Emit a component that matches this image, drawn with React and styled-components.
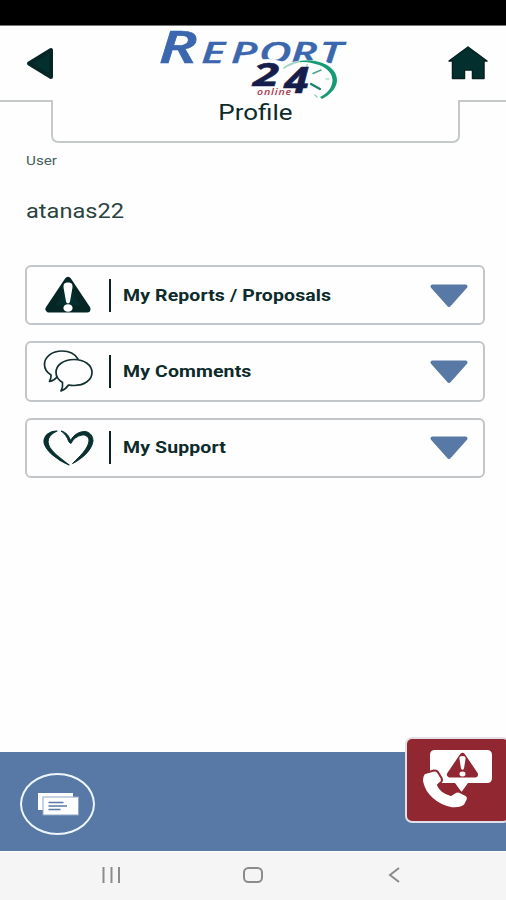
import React from 'react';
import styled, { createGlobalStyle } from 'styled-components';

const GlobalStyle = createGlobalStyle`
    * {
        box-sizing: border-box;
    }
    body {
        margin: 0;
        background: #fefefe;
        font-family: Roboto, "Liberation Sans", sans-serif;
        color: #0c2b2b;
    }
    svg {
        display: block;
    }
    button {
        padding: 0;
        border: none;
        background: none;
        font: inherit;
        color: inherit;
        cursor: pointer;
    }
`
const Screen = styled.div`
    width: 506px;
    height: 900px;
    display: flex;
    flex-direction: column;
    overflow: hidden;
`
const StatusBar = styled.div`
    height: 25px;
    flex: none;
    background: #000;
    border-bottom: 1px solid #777;
    box-sizing: content-box;
`
const Header = styled.header`
    height: 74px;
    flex: none;
    display: flex;
    align-items: flex-start;
    justify-content: space-between;
    padding: 0 17px 0 25px;
`
const BackButton = styled.button`
    margin-top: 20px;
    width: 30px;
`
const HomeButton = styled.button`
    margin-top: 19px;
    width: 42px;
`
const Logo = styled.svg`
    margin: 0 auto 0 103px;
    overflow: visible;
`
const TabRow = styled.div`
    display: grid;
    grid-template-columns: 51px 1fr 46px;
    height: 43px;
    flex: none;
`
const TabSide = styled.div`
    border-top: 2px solid #c6c9ca;
`
const Tab = styled.div`
    border: 2px solid #c6c9ca;
    border-top: none;
    border-radius: 0 0 7px 7px;
    text-align: center;
`
const Wide = styled.span`
    display: inline-block;
    transform: scaleX(${props=>props.$scale || 1.18});
    transform-origin: ${props=>props.$origin || 'left'} center;
    white-space: nowrap;
`
const Title = styled.h1`
    margin: 0;
    font-size: 22px;
    line-height: 26px;
    font-weight: 400;
`
const Content = styled.main`
    flex: 1;
    padding: 10px 21px 0 25px;
`
const Label = styled.div`
    padding-left: 1px;
    font-size: 12.5px;
    line-height: 16px;
    color: #45605c;
`
const UserName = styled.div`
    margin: 30px 0 41px;
    padding-left: 1px;
    font-size: 20px;
    line-height: 25px;
    color: #2a4340;
`
const List = styled.div`
    display: flex;
    flex-direction: column;
    gap: 16px;
`
const Card = styled.button`
    width: 100%;
    height: 60.25px;
    display: flex;
    align-items: center;
    padding: 0 14px;
    border: 2px solid #c3c6c8;
    border-radius: 6px;
`
const CardIcon = styled.div`
    width: 54px;
`
const Divider = styled.div`
    width: 2px;
    height: 33px;
    margin: 0 12px 0 14px;
    background: #0c2323;
`
const CardText = styled.div`
    flex: 1;
    text-align: left;
    font-size: 16.5px;
    font-weight: 700;
    letter-spacing: 0.1px;
`
const BottomBar = styled.div`
    position: relative;
    height: 99px;
    flex: none;
    padding: 21px 20px;
    background: #5879a6;
`
const ChatButton = styled.button`
    width: 75px;
    height: 62px;
    display: flex;
    align-items: center;
    justify-content: center;
    border: 2px solid #eef6fd;
    border-radius: 50%;
`
// sits over the top edge of the bottom bar
const EmergencyButton = styled.button`
    position: absolute;
    top: -15px;
    right: -4px;
    width: 105px;
    height: 86px;
    border: 2px solid #e3dfe6;
    border-radius: 7px;
    background: #912731;
`
const SystemNav = styled.div`
    height: 49px;
    flex: none;
    display: flex;
    align-items: center;
    justify-content: space-between;
    padding: 0 105px 2px 101px;
    background: #f5f5f5;
    border-top: 1px solid #fff;
`

const WarningIcon = () => (
    <svg width="54" height="50" viewBox="0 0 54 50">
        <path d="M27 10.500L8 39H46Z" fill="#03302f" stroke="#062525" strokeWidth="7" strokeLinejoin="round" />
        <path d="M27 12.500C31 12.500 32 14.500 31.300 18.500L29 31.500C28.500 34 25.500 34 25 31.500L22.700 18.500C22 14.500 23 12.500 27 12.500Z" fill="#fff" />
        <ellipse cx="27" cy="38" rx="4.600" ry="3.800" fill="#fff" />
    </svg>
)

const CommentsIcon = () => (
    <svg width="54" height="50" viewBox="0 0 54 50" fill="none" stroke="#142f2f" strokeWidth="1.700" strokeLinejoin="round" strokeLinecap="round">
        <path d="M37 13C34 8 28 5 21 5C11 5 3.500 11 3.500 18.500C3.500 23 6 26.500 10 29C10.500 31.500 9.500 33.500 8.500 35.500C11.500 35 14 33.500 15.500 31.500" />
        <path d="M33 13.500C43.500 13.500 51 19 51 26.500C51 34 43.500 39.500 33 39.500C31 39.500 29 39.300 27.500 39C25.500 42 23 44 20 45C21.500 42.500 22 40 21.500 36.500C17.500 34 15 30.500 15 26.500C15 19 22.500 13.500 33 13.500Z" />
    </svg>
)

const HeartIcon = () => (
    <svg width="54" height="50" viewBox="0 0 54 50" fill="#08302e">
        <path d="M16 8C8 8 3 13 3 19C4 27 16 37 28 42C19 35 7 27 7 19C7 13 11 10 16 8Z" stroke="#08302e" strokeWidth="1.200" strokeLinejoin="round" />
        <path d="M20 8C25 9 28 13 29.500 17.500C33 11.500 38 8.500 44 8.500C49 9 52 13 52 18C51 27 41 36 31.500 40.500C39 33 47 26 48 18C48 14 45 11.500 41 12C36 13 32 16 30 20.500L28 19C26 14 24 10.500 20 8Z" stroke="#08302e" strokeWidth="1" strokeLinejoin="round" />
    </svg>
)

const ArrowDown = () => (
    <svg width="40" height="25" viewBox="0 0 40 25">
        <path d="M3.500 3.500H36.500L20 22Z" fill="#5879a6" stroke="#5879a6" strokeWidth="4" strokeLinejoin="round" />
    </svg>
)

const ReportLogo = () => (
    <Logo width="196" height="76" viewBox="0 0 196 76">
        <g fill="#3b67af" stroke="#3b67af" fontFamily="Open Sans, sans-serif" fontStyle="italic">
            <text transform="translate(0.500 36.500) scale(1.450 1)" x="0" y="0" fontSize="45" fontWeight="600" strokeWidth="0.600">R</text>
            <text transform="translate(43 36.500) scale(1.560 1)" x="0 19 37 57.500 76" y="0" fontSize="29" fontWeight="600" strokeWidth="0.300">EPORT</text>
        </g>
        <path d="M96 43C98 33.500 106 31.500 118 34L131 37C140 34 157 33 167 35L181 43V65L150 74L90 70Z" fill="#fefefe" />
        <g fill="none" strokeLinecap="round">
            <path d="M126 42C134 36 146 33.500 157 35.500" stroke="#a5d6c6" strokeWidth="1.800" />
            <path d="M142 35C162 32 179 41 179 54C179 62 172 69 164 73L162 71C170 67 174.500 61 174.500 54C174.500 44 162 36 142 36Z" fill="#159b75" stroke="none" />
            <path d="M155 47.500L163 44" stroke="#49a58c" strokeWidth="1.500" />
            <path d="M153 58L162 63" stroke="#187f69" strokeWidth="2.200" />
            <path d="M149 38.500V41M168 53H171M157 69L159 71" stroke="#8dcab8" strokeWidth="1.200" />
        </g>
        <g fill="#171d4b" stroke="#171d4b" strokeWidth="0.600" fontFamily="Open Sans, sans-serif" fontWeight="700" fontStyle="italic">
            <text transform="translate(95 59.500) scale(1.480 1)" x="0" y="0" fontSize="32">2</text>
            <text transform="translate(126 66.500) scale(1.250 1)" x="0" y="0" fontSize="36">4</text>
        </g>
        <text transform="translate(99 68.500) scale(1.180 1)" x="0" y="0" fill="#b0364a" fontFamily="Open Sans, sans-serif" fontWeight="600" fontStyle="italic" fontSize="9" letterSpacing="0.700">online</text>
    </Logo>
)

const items = [
    { text: 'My Reports / Proposals', Icon: WarningIcon },
    { text: 'My Comments', Icon: CommentsIcon },
    { text: 'My Support', Icon: HeartIcon },
]

export default function App() {

    return (
        <Screen>
            <GlobalStyle />
            <StatusBar />
            <Header>
                <BackButton aria-label="Back">
                    <svg width="30" height="36" viewBox="0 0 30 36">
                        <path d="M4 17.500L26 4V31Z" fill="#03302f" stroke="#062525" strokeWidth="4" strokeLinejoin="round" />
                    </svg>
                </BackButton>
                <ReportLogo />
                <HomeButton aria-label="Home">
                    <svg width="42" height="36" viewBox="0 0 42 36">
                        <path d="M21 2L40 16H37V33.500H25.500V25H17.500V33.500H5.500V16H2Z" fill="#03302f" stroke="#062020" strokeWidth="1.500" strokeLinejoin="round" />
                    </svg>
                </HomeButton>
            </Header>
            <TabRow>
                <TabSide />
                <Tab>
                    <Title><Wide $origin="center">Profile</Wide></Title>
                </Tab>
                <TabSide />
            </TabRow>
            <Content>
                <Label><Wide $scale={1.22}>User</Wide></Label>
                <UserName><Wide>atanas22</Wide></UserName>
                <List>
                    {items.map(({ text, Icon }) => (
                        <Card key={text}>
                            <CardIcon><Icon /></CardIcon>
                            <Divider />
                            <CardText><Wide>{text}</Wide></CardText>
                            <ArrowDown />
                        </Card>
                    ))}
                </List>
            </Content>
            <BottomBar>
                <ChatButton aria-label="Messages">
                    <svg width="44" height="26" viewBox="0 0 44 26">
                        <rect x="2" y="2" width="35" height="17" fill="#fff" />
                        <rect x="7" y="6" width="35.500" height="18" fill="#fff" stroke="#8fa6c6" strokeWidth="1" />
                        <path d="M12.500 11.500H27.500M12.500 15H31M12.500 18.500H24.500" stroke="#5879a6" strokeWidth="1.400" />
                    </svg>
                </ChatButton>
                <EmergencyButton aria-label="Emergency call">
                    <svg width="101" height="82" viewBox="0 0 101 82">
                        <path d="M28 11H80Q85 11 85 16V39Q85 44 80 44H61L54.500 53L48 44H28Q23 44 23 39V16Q23 11 28 11Z" fill="#fff" />
                        <path d="M55.500 17L43 35.500H68Z" fill="#912731" stroke="#912731" strokeWidth="6" strokeLinejoin="round" />
                        <path d="M55.500 17Q59 17 58.500 20L57 29.500Q55.500 32 54 29.500L52.500 20Q52 17 55.500 17Z" fill="#fff" />
                        <ellipse cx="55.500" cy="35" rx="3" ry="2.400" fill="#fff" />
                        <path d="M18 34L27 31.500Q30 31 31.500 34L34.500 39Q36 42 33 44L31 46Q34 53 44 56L48 53.500Q50 52 53 53L59 56Q62 58 60.500 61L58 66Q54 70 44 69C29 66 17 55 15 42Q15 36 18 34Z" fill="#fff" stroke="#912731" strokeWidth="2" />
                    </svg>
                </EmergencyButton>
            </BottomBar>
            <SystemNav>
                <svg width="20" height="18" viewBox="0 0 20 18">
                    <path d="M2.500 1V17M10.500 1V17M18 1V17" stroke="#8b8b8b" strokeWidth="2" />
                </svg>
                <svg width="26" height="18" viewBox="0 0 26 18">
                    <rect x="2" y="2" width="18" height="14" rx="4.500" fill="none" stroke="#8b8b8b" strokeWidth="2" />
                </svg>
                <svg width="13" height="18" viewBox="0 0 13 18">
                    <path d="M11 2L2 9L11 16" fill="none" stroke="#8b8b8b" strokeWidth="2" />
                </svg>
            </SystemNav>
        </Screen>
    )
}
